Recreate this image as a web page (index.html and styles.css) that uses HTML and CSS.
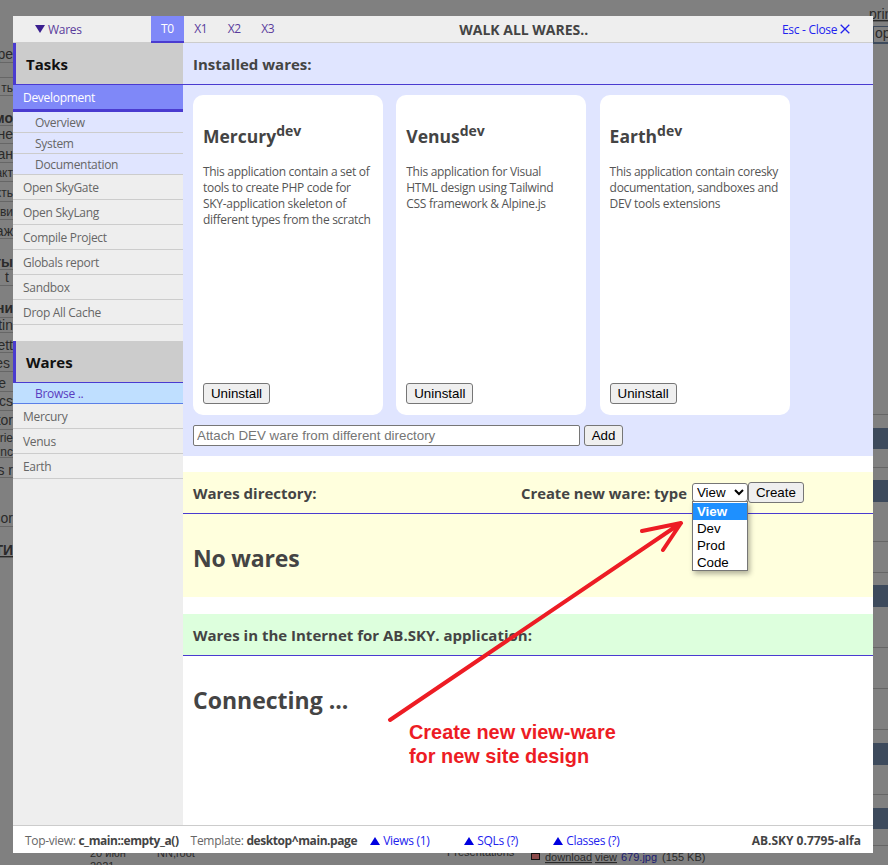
FILE: index.html
```html
<!DOCTYPE html>
<html lang="en">
<head>
<meta charset="utf-8">
<title>Walk all wares</title>
<link rel="stylesheet" href="styles.css">
</head>
<body>
<svg class="backdrop" width="888" height="865" viewBox="0 0 888 865" aria-hidden="true">
  <g class="bands">
    <rect x="873" y="428" width="15" height="21"/><rect x="873" y="480" width="15" height="22"/>
    <rect x="873" y="585" width="15" height="22"/><rect x="873" y="743" width="15" height="22"/>
    <rect x="873" y="808" width="15" height="21"/>
    <rect x="873" y="26" width="15" height="18"/>
    <rect class="lt" x="874" y="27" width="14" height="15"/>
  </g>
  <g class="rules">
    <path d="M873 414H888M873 467H888M873 541H888M873 572H888M873 647H888M873 688H888M873 729H888M873 794H888M873 845H888"/>
    <path d="M0 62H13M0 77H13M0 95H13M0 125H13M0 143H13M0 162H13M0 181H13M0 201H13M0 219H13M0 238H13M0 269H13M0 285H13M0 317H13M0 332H13M0 352H13M0 371H13M0 391H13M0 410H13M0 429H13M0 457H13M0 477H13M0 526H13"/>
  </g>
  <g class="frag">
    <text x="13" y="59">пре</text><text x="13" y="92" class="sm">ть</text>
    <text x="13" y="123" class="bd">мо</text><text x="13" y="139">вне</text>
    <text x="13" y="159">ан</text><text x="13" y="177" class="sm">акт</text>
    <text x="13" y="197" class="sm">кть</text><text x="13" y="216" class="sm">тви</text>
    <text x="13" y="236">аж</text><text x="13" y="267" class="bd">ты</text>
    <text x="9" y="282">t</text><text x="13" y="313" class="bd">ни</text>
    <text x="13" y="330">ettin</text><text x="13" y="350">sett</text>
    <text x="10" y="368">es</text><text x="6" y="388">e</text>
    <text x="13" y="406">tics</text><text x="13" y="425">tor</text>
    <text x="13" y="442" class="sm">trie</text><text x="13" y="456" class="sm">inc</text>
    <text x="13" y="475">s r</text><text x="13" y="523">cor</text>
    <text x="13" y="555" class="bd ul">ТИ</text>
    <text x="90" y="857" class="low">20 июн</text>
    <text x="90" y="870" class="low">2021</text>
    <text x="157" y="857" class="low">NN,root</text>
    <text x="447" y="856" class="low">Presentations</text>
    <text x="545" y="861" class="low ul">download</text>
    <text x="595" y="861" class="low ul">view</text>
    <text x="621" y="861" class="low blue">679.jpg</text>
    <text x="662" y="861" class="low">(155 KB)</text>
    <text x="869" y="19" class="ul">print</text>
    <text x="875" y="38">op</text>
  </g>
  <rect class="ico" x="531.500" y="853.500" width="8" height="6"/>
</svg>

<div class="modal">
  <header class="top">
    <div class="top-wares"><span class="tri-down"></span><span>Wares</span></div>
    <nav class="tabs">
      <span class="tab tab-on">T0</span>
      <span class="tab">X1</span>
      <span class="tab">X2</span>
      <span class="tab">X3</span>
    </nav>
    <div class="top-title">WALK ALL WARES..</div>
    <div class="top-close">
      <span>Esc - Close</span>
      <svg class="x" width="10" height="10" viewBox="0 0 10 10"><path d="M.7.7 9.300 9.300M9.300.7.7 9.300"/></svg>
    </div>
  </header>

  <div class="body">
    <aside class="side">
      <h2 class="side-head">Tasks</h2>
      <a class="item item-on">Development</a>
      <div class="subs">
        <a class="sub">Overview</a>
        <a class="sub">System</a>
        <a class="sub">Documentation</a>
      </div>
      <a class="item">Open SkyGate</a>
      <a class="item">Open SkyLang</a>
      <a class="item">Compile Project</a>
      <a class="item">Globals report</a>
      <a class="item">Sandbox</a>
      <a class="item">Drop All Cache</a>
      <h2 class="side-head side-head-2">Wares</h2>
      <a class="sub sub-on">Browse ..</a>
      <a class="item">Mercury</a>
      <a class="item">Venus</a>
      <a class="item">Earth</a>
    </aside>

    <main class="main">
      <section class="installed">
        <h3 class="head">Installed wares:</h3>
        <div class="cards">
          <article class="card">
            <h4 class="card-title">Mercury<sup>dev</sup></h4>
            <p class="card-text">This application contain a set of tools to create PHP code for SKY-application skeleton of different types from the scratch</p>
            <button class="btn card-btn">Uninstall</button>
          </article>
          <article class="card">
            <h4 class="card-title">Venus<sup>dev</sup></h4>
            <p class="card-text">This application for Visual<br>HTML design using Tailwind<br>CSS framework &amp; Alpine.js</p>
            <button class="btn card-btn">Uninstall</button>
          </article>
          <article class="card">
            <h4 class="card-title">Earth<sup>dev</sup></h4>
            <p class="card-text">This application contain coresky documentation, sandboxes and DEV tools extensions</p>
            <button class="btn card-btn">Uninstall</button>
          </article>
        </div>
        <div class="attach">
          <input class="attach-input" type="text" placeholder="Attach DEV ware from different directory">
          <button class="btn">Add</button>
        </div>
      </section>

      <section class="directory">
        <div class="head head-dir">
          <h3 class="head-label">Wares directory:</h3>
          <div class="create">
            <span>Create new ware: type</span>
            <span class="pick">
              <select class="select"><option>View</option><option>Dev</option><option>Prod</option><option>Code</option></select>
              <span class="list">
                <span class="opt opt-on">View</span>
                <span class="opt">Dev</span>
                <span class="opt">Prod</span>
                <span class="opt">Code</span>
              </span>
            </span>
            <button class="btn">Create</button>
          </div>
        </div>
        <div class="big big-dir">No wares</div>
      </section>

      <section class="internet">
        <h3 class="head head-net">Wares in the Internet for AB.SKY. application:</h3>
        <div class="big big-net">Connecting ...</div>
      </section>
    </main>
  </div>

  <footer class="foot">
    <span class="foot-a">Top-view: <b>c_main::empty_a()</b></span>
    <span class="foot-b">Template: <b>desktop^main.page</b></span>
    <a class="foot-link foot-views"><span class="tri-up"></span>Views (1)</a>
    <a class="foot-link foot-sqls"><span class="tri-up"></span>SQLs (?)</a>
    <a class="foot-link"><span class="tri-up"></span>Classes (?)</a>
    <b class="foot-ver">AB.SKY 0.7795-alfa</b>
  </footer>
</div>

<svg class="arrow" width="888" height="865" viewBox="0 0 888 865" aria-hidden="true">
  <path d="M390 720 681 523M642 531 681 523 663 550"/>
</svg>
<div class="note">Create new view-ware<br>for new site design</div>
</body>
</html>
```

FILE: styles.css
```css
* { box-sizing: border-box; }

html, body {
  margin: 0;
  height: 865px;
  overflow: hidden;
  background: #808080;
  font-family: "Open Sans", "Noto Sans", sans-serif;
  font-size: 12px;
  letter-spacing: -.3px;
  color: #444;
}

.backdrop { position: absolute; left: 0; top: 0; }
.bands rect { fill: #3d4a5c; }
.bands .lt { fill: #808080; }
.rules path { stroke: #666; stroke-width: 1; fill: none; shape-rendering: crispEdges; }
.frag text { font: 14px "Liberation Sans", sans-serif; fill: #2a2a2a; text-anchor: start; letter-spacing: 0; }
.frag text[x="13"] { text-anchor: end; }
.frag text[x="10"], .frag text[x="9"], .frag text[x="6"] { text-anchor: end; }
.frag .sm { font-size: 12px; }
.frag .bd { font-weight: 700; }
.frag .ul { text-decoration: underline; }
.frag .low { font-size: 11px; }
.frag .blue { fill: #1a1a70; }
.ico { fill: #8a4a4a; stroke: #111; stroke-width: 1; }

.modal {
  position: absolute;
  left: 13px;
  top: 16px;
  width: 860px;
  height: 837px;
  background: #fff;
  display: flex;
  flex-direction: column;
}

/* top bar */
.top {
  display: flex;
  align-items: center;
  height: 27px;
  flex: none;
  background: #eee;
  border-bottom: 1px solid #ccc;
}
.top-wares {
  width: 138px;
  padding-left: 22px;
  display: flex;
  align-items: center;
  gap: 3px;
  color: #5a3c9c;
  line-height: 29px;
}
.tri-down {
  width: 0;
  height: 0;
  border-left: 5px solid transparent;
  border-right: 5px solid transparent;
  border-top: 8px solid #3a1f8f;
}
.tabs { display: flex; height: 27px; }
.tab {
  width: 33.500px;
  text-align: center;
  line-height: 26px;
  color: #5a3c9c;
}
.tab-on {
  width: 33px;
  background: #7f88f8;
  color: #fff;
  border-bottom: 2px solid #4a3bd0;
  height: 27px;
}
.top-title {
  flex: 1;
  text-align: center;
  font-weight: 700;
  font-size: 14px;
  letter-spacing: 0;
  padding-right: 19px;
  line-height: 29px;
}
.top-close {
  display: flex;
  align-items: center;
  gap: 3px;
  width: 91px;
  color: #2222ee;
  line-height: 29px;
}
.x path { stroke: #2222ee; stroke-width: 1.300; fill: none; }

/* body */
.body { flex: 1; display: flex; min-height: 0; }

.side { width: 170px; flex: none; background: #eee; }
.side-head {
  margin: 0;
  height: 42px;
  padding-left: 10px;
  display: flex;
  align-items: center;
  background: #ccc;
  border-left: 3px solid #4a3bd0;
  border-bottom: 1px solid #4a3bd0;
  font-size: 15px;
  font-weight: 700;
  color: #111;
  letter-spacing: 0;
}
.side-head-2 { margin-top: 16px; }
.item {
  display: block;
  height: 25px;
  line-height: 26px;
  padding-left: 10px;
  border-bottom: 1px solid #ccc;
  color: #666;
}
.item-on {
  height: 27px;
  line-height: 26px;
  background: #7f88f8;
  color: #fff;
  border-bottom: 3px solid #4a3bd0;
}
.subs { background: #e0e5ff; }
.sub {
  display: block;
  height: 21px;
  line-height: 22px;
  padding-left: 22px;
  border-bottom: 1px solid #ccc;
  color: #666;
}
.sub-on {
  background: #bfdfff;
  color: #5a3cc0;
  border-bottom-color: #5a7fe8;
}

/* main */
.main { flex: 1; min-width: 0; }
.head {
  margin: 0;
  height: 42px;
  padding-left: 10px;
  display: flex;
  align-items: center;
  font-size: 15px;
  font-weight: 700;
  color: #444;
  letter-spacing: 0;
  border-bottom: 1px solid #4a3bd0;
}

.installed { background: #e0e5ff; height: 413px; }
.cards {
  display: flex;
  gap: 13.300px;
  padding: 10px 0 0 10px;
}
.card {
  width: 190px;
  height: 320px;
  padding: 0 10px 11px;
  background: #fff;
  border-radius: 10px;
  display: flex;
  flex-direction: column;
  align-items: flex-start;
}
.card-title {
  margin: 26px 0 0;
  font-size: 17.500px;
  line-height: 30px;
  font-weight: 700;
  color: #444;
  letter-spacing: 0;
}
.card-title sup { font-size: 14px; line-height: 0; vertical-align: 7px; }
.card-text { margin: 13px 0 0; line-height: 16px; color: #555; }
.card-btn { margin-top: auto; width: 67px; padding: 0; }

.btn {
  height: 21px;
  padding: 0 6px;
  font: 13.333px/1 "Liberation Sans", Arial, sans-serif;
  letter-spacing: 0;
  color: #000;
  background: #efefef;
  border: 1px solid #767676;
  border-radius: 3px;
}

.attach {
  display: flex;
  gap: 4px;
  margin: 10px 0 0 10px;
}
.attach-input {
  width: 387px;
  height: 21px;
  padding: 0 3px;
  font: 13.333px "Liberation Sans", Arial, sans-serif;
  letter-spacing: 0;
  border: 1px solid #767676;
  border-radius: 2px;
  background: #fff;
}
.attach .btn { width: 39px; padding: 0; }
.attach-input::placeholder { color: #757575; opacity: 1; }

.directory { margin-top: 16px; background: #ffd; height: 125px; }
.head-dir { padding-left: 10px; }
.head-label { margin: 0; font-size: 15px; font-weight: 700; width: 328px; flex: none; }
.create {
  display: flex;
  align-items: center;
  font-size: 14.800px;
  font-weight: 700;
}
.pick { position: relative; display: block; margin-left: 5px; height: 19px; }
.select {
  display: block;
  width: 56px;
  height: 19px;
  padding: 0;
  font: 13.333px "Liberation Sans", Arial, sans-serif;
  letter-spacing: 0;
  color: #000;
  background: #fff;
  border: 1px solid #767676;
  border-radius: 3px;
}
.list {
  position: absolute;
  left: 0;
  top: 18px;
  width: 56px;
  height: 70px;
  padding-top: 1px;
  display: block;
  background: #fff;
  border: 1px solid #767676;
  box-shadow: 2px 3px 5px rgba(0, 0, 0, .3);
  font: 13.333px/17px "Liberation Sans", Arial, sans-serif;
  letter-spacing: 0;
  color: #000;
  z-index: 2;
}
.opt { display: block; height: 17px; padding-left: 4px; }
.opt-on { background: #1e90ff; color: #fff; font-weight: 700; }
.create .btn { height: 21px; width: 56px; padding: 0; font-weight: 400; }

.big { font-size: 23px; font-weight: 700; color: #444; padding-left: 10px; letter-spacing: 0; }
.big-dir { padding-top: 26px; line-height: 36px; letter-spacing: -.2px; }

.internet { margin-top: 17px; }
.head-net { background: #dfd; }
.big-net { padding-top: 26px; line-height: 36px; }

/* footer */
.foot {
  flex: none;
  height: 28px;
  display: flex;
  align-items: center;
  padding: 2px 12px 0;
  border-top: 1px solid #ccc;
  background: #fff;
  color: #666;
}
.foot b { color: #444; letter-spacing: -.42px; }
.foot-a { margin-right: 12px; }
.foot-b { margin-right: 13px; }
.foot-link { color: #2222ee; display: flex; align-items: center; }
.foot-views { width: 94px; }
.foot-sqls { width: 89px; }
.tri-up {
  width: 0;
  height: 0;
  margin-right: 3px;
  border-left: 5px solid transparent;
  border-right: 5px solid transparent;
  border-bottom: 8px solid #0000e0;
}
.foot .foot-ver { margin-left: auto; letter-spacing: 0; }

/* annotation drawn on top of the screenshot */
.arrow { position: absolute; left: 0; top: 0; pointer-events: none; z-index: 3; }
.arrow path {
  fill: none;
  stroke: #ed1c24;
  stroke-width: 4;
  stroke-linecap: round;
  stroke-linejoin: round;
}
.note {
  position: absolute;
  left: 409px;
  top: 720px;
  z-index: 3;
  font: 700 19.900px/24px "Liberation Sans", Arial, sans-serif;
  letter-spacing: 0;
  color: #ed1c24;
}
```
